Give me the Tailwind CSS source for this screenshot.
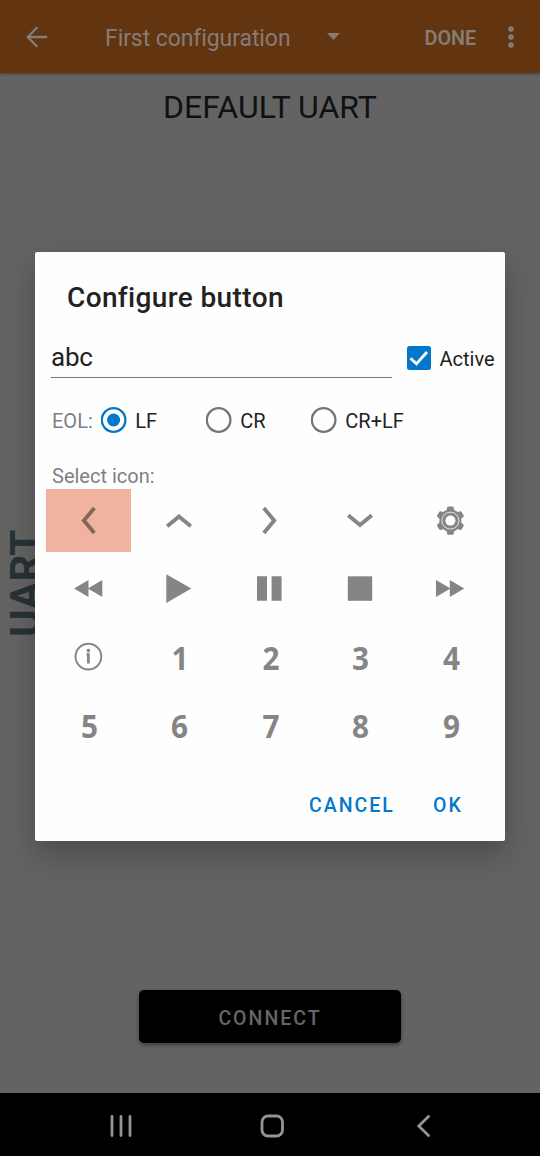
<!DOCTYPE html>
<html lang="en">
<head>
<meta charset="utf-8">
<title>UART</title>
<script src="https://cdn.jsdelivr.net/npm/@tailwindcss/browser@4"></script>
</head>
<body class="font-['Roboto',sans-serif]">
<div class="relative flex h-[1156px] w-[540px] flex-col overflow-hidden bg-[#636363]">
  <header class="flex h-[73px] shrink-0 items-center bg-[#62340f] text-[#857c76] shadow-[0_1px_3px_rgba(0,0,0,.35)]">
    <svg class="ml-[26px] mt-px h-[22px] w-[22px]" viewBox="0 0 22 22" fill="none" stroke="currentColor" stroke-width="2.3"><path d="M21.3 11H2M11.3 1.3L1.7 11l9.6 9.7"/></svg>
    <span class="ml-[57px] mt-[5px] w-[186px] whitespace-nowrap text-[23px] tracking-[-0.08px]">First configuration</span>
    <svg class="ml-[36px] h-[7px] w-[13px]" viewBox="0 0 13 7"><path d="M0 0h13L6.5 7z" fill="currentColor"/></svg>
    <span class="ml-[84.5px] mt-[4px] w-[52.5px] whitespace-nowrap text-[19.8px] font-semibold">DONE</span>
    <svg class="ml-[31px] h-[22px] w-[6px]" viewBox="0 0 6 22" fill="currentColor"><circle cx="3" cy="3" r="2.8"/><circle cx="3" cy="11" r="2.8"/><circle cx="3" cy="19" r="2.8"/></svg>
  </header>
  <main class="flex flex-1 flex-col items-center">
    <h1 class="mt-[15px] whitespace-nowrap text-[32px] leading-[38px] text-[#111]">DEFAULT UART</h1>
    <div class="mt-[402px] flex h-[110px] w-full pl-[4px]">
      <span class="rotate-180 text-center text-[42px] leading-[44px] font-bold text-[#273136] [writing-mode:vertical-rl]">UART</span>
    </div>
    <button class="mt-auto mb-[50px] flex h-[53px] w-[262px] items-center justify-center rounded-[5px] bg-black pt-[4px] text-[19.5px] font-medium tracking-[2px] text-[#666] shadow-[0_2px_4px_rgba(0,0,0,.4)]">CONNECT</button>
  </main>
  <nav class="flex h-[63px] shrink-0 items-center bg-black pt-[3px] text-[#949494]">
    <svg class="ml-[110px] h-[22px] w-[22px]" viewBox="0 0 22 22" stroke="currentColor" stroke-width="2.8" stroke-linecap="round"><path d="M2 1.5v19M11 1.5v19M20 1.5v19"/></svg>
    <svg class="ml-[128px] h-[24px] w-[24px]" viewBox="0 0 24 24" fill="none" stroke="currentColor" stroke-width="2.8"><rect x="2" y="2" width="20.5" height="20" rx="6"/></svg>
    <svg class="ml-[132px] h-[22px] w-[15px]" viewBox="0 0 15 22" fill="none" stroke="currentColor" stroke-width="2.8" stroke-linecap="round"><path d="M12.5 1.5L2.8 11l9.7 9.5"/></svg>
  </nav>

  <section class="absolute left-[35px] top-[252px] flex h-[589px] w-[470px] flex-col rounded-[2px] bg-[#fefefe] text-[#222] shadow-[0_14px_30px_rgba(0,0,0,.24)]">
    <h2 class="ml-[32px] mt-[29px] whitespace-nowrap text-[28px] leading-[34px] font-medium tracking-[0.37px]">Configure button</h2>
    <div class="ml-[16px] mt-[23px] flex h-[40px]">
      <div class="w-[341px] border-b border-[#777] text-[26px] leading-[38px] tracking-[-0.2px]">abc</div>
      <svg class="ml-[14.5px] mt-[8px] h-[24px] w-[24px]" viewBox="0 0 24 24"><rect width="24" height="24" rx="2.5" fill="#0277cc"/><path d="M3.5 12.2l6 5.6L20 6" fill="none" stroke="white" stroke-width="2.8"/></svg>
      <span class="ml-[9px] mt-[9px] whitespace-nowrap text-[20px] leading-[24px]">Active</span>
    </div>
    <div class="ml-[17px] mt-[29px] flex h-[26px] items-center whitespace-nowrap text-[20px]">
      <span class="w-[49.3px] pt-px text-[#808080]">EOL:</span>
      <svg class="h-[26px] w-[26px]" viewBox="0 0 26 26" fill="none"><circle cx="12.6" cy="13" r="11.8" stroke="#0277cc" stroke-width="2.3"/><circle cx="12.6" cy="13" r="6.5" fill="#0277cc"/></svg>
      <span class="w-[79px] pl-[8px] pt-px">LF</span>
      <svg class="h-[26px] w-[26px]" viewBox="0 0 26 26" fill="none"><circle cx="12.6" cy="13" r="11.8" stroke="#757575" stroke-width="2.3"/></svg>
      <span class="w-[79px] pl-[8px] pt-px">CR</span>
      <svg class="h-[26px] w-[26px]" viewBox="0 0 26 26" fill="none"><circle cx="12.6" cy="13" r="11.8" stroke="#757575" stroke-width="2.3"/></svg>
      <span class="pl-[8px] pt-px">CR+LF</span>
    </div>
    <div class="ml-[17px] mt-[31px] mb-px whitespace-nowrap text-[20px] leading-[24px] text-[#808080]">Select icon:</div>
    <div class="ml-[10.6px] grid w-[447.4px] grid-cols-5 grid-rows-[repeat(4,63px)] gap-x-[5.3px] gap-y-[5.3px] font-['Open_Sans',sans-serif] text-[33px] leading-none font-bold text-[#858585] *:flex *:items-center *:justify-center">
      <div class="bg-[#f0b3a0] text-[#86665c]"><svg class="h-[30px] w-[30px]" viewBox="0 0 30 30" fill="none" stroke="currentColor" stroke-width="3.9"><path d="M21.3 2.1L10.9 14.5l10.4 12.4"/></svg></div>
      <div><svg class="h-[30px] w-[30px]" viewBox="0 0 30 30" fill="none" stroke="currentColor" stroke-width="3.9"><path d="M3.2 20.2L15 10.5l11.8 9.7"/></svg></div>
      <div><svg class="h-[30px] w-[30px]" viewBox="0 0 30 30" fill="none" stroke="currentColor" stroke-width="3.9"><path d="M9.8 2.1L20.2 14.5 9.8 26.9"/></svg></div>
      <div><svg class="h-[30px] w-[30px]" viewBox="0 0 30 30" fill="none" stroke="currentColor" stroke-width="3.9"><path d="M3.2 9.3L15 19l11.8-9.7"/></svg></div>
      <div><svg class="h-[30px] w-[30px]" viewBox="0 0 30 30" fill="none"><g fill="currentColor"><circle cx="15.4" cy="14.6" r="11"/><path id="tooth" d="M11.2 6l1-4.6q.2-.9 1-.9h4.4q.8 0 1 .9l1 4.6z"/><use href="#tooth" transform="rotate(60 15.4 14.6)"/><use href="#tooth" transform="rotate(120 15.4 14.6)"/><use href="#tooth" transform="rotate(180 15.4 14.6)"/><use href="#tooth" transform="rotate(240 15.4 14.6)"/><use href="#tooth" transform="rotate(300 15.4 14.6)"/></g><circle cx="15.4" cy="14.6" r="8.5" stroke="#fefefe" stroke-width=".8"/><circle cx="15.4" cy="14.6" r="5" fill="#fefefe"/></svg></div>
      <div><svg class="h-[30px] w-[30px]" viewBox="0 0 30 30" fill="currentColor"><path d="M1 14.6l14.5-8.5v17zM14.8 14.6l14.5-8.5v17z"/></svg></div>
      <div><svg class="h-[30px] w-[30px]" viewBox="0 0 30 30" fill="currentColor"><path d="M2.3.2L27.3 14.6 2.3 29z"/></svg></div>
      <div><svg class="h-[30px] w-[30px]" viewBox="0 0 30 30" fill="currentColor"><path d="M3 2.3h10v24.5H3zM17.6 2.3h10v24.5h-10z"/></svg></div>
      <div><svg class="h-[30px] w-[30px]" viewBox="0 0 30 30" fill="currentColor"><path d="M2.8 2.3h24.4v24.5H2.8z"/></svg></div>
      <div><svg class="h-[30px] w-[30px]" viewBox="0 0 30 30" fill="currentColor"><path d="M1 6.1l14.5 8.5L1 23.1zM14.8 6.1l14.5 8.5-14.5 8.5z"/></svg></div>
      <div><svg class="h-[30px] w-[30px]" viewBox="0 0 30 30" fill="none"><circle cx="15.4" cy="14.6" r="12.9" stroke="currentColor" stroke-width="1.9"/><circle cx="15.4" cy="8.6" r="1.8" fill="currentColor"/><path d="M13.6 12.3h1.8M15.4 11.2v10.2" stroke="currentColor" stroke-width="2.7"/></svg></div>
      <div class="scale-x-90 pl-[3px]">1</div><div class="scale-x-90 pl-[3px]">2</div><div class="scale-x-90 pl-[2px]">3</div><div class="scale-x-90 pl-[2px]">4</div>
      <div class="scale-x-90 pl-[2px]">5</div><div class="scale-x-90 pl-[2px]">6</div><div class="scale-x-90 pl-[3px]">7</div><div class="scale-x-90 pl-[2px]">8</div><div class="scale-x-90 pl-[2px]">9</div>
    </div>
    <div class="ml-[274px] mt-[37px] flex whitespace-nowrap text-[19.5px] leading-[24px] font-medium tracking-[2px] text-[#0277cc]">
      <span class="w-[124px]">CANCEL</span><span>OK</span>
    </div>
  </section>
</div>
</body>
</html>
